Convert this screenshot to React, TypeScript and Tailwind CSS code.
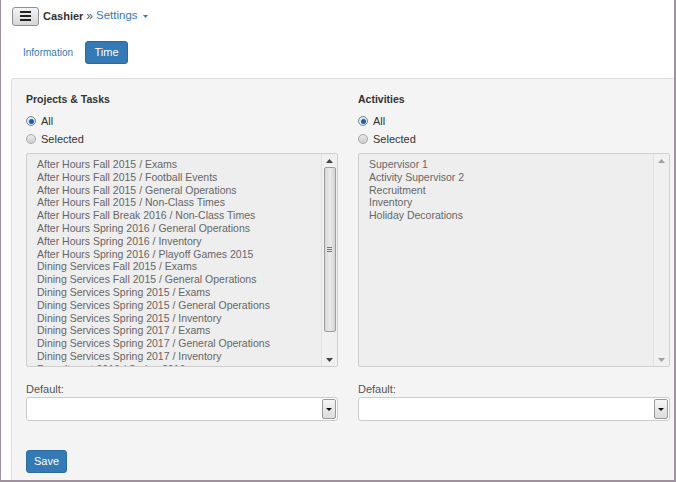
import React from 'react';

const projects = [
  'After Hours Fall 2015 / Exams',
  'After Hours Fall 2015 / Football Events',
  'After Hours Fall 2015 / General Operations',
  'After Hours Fall 2015 / Non-Class Times',
  'After Hours Fall Break 2016 / Non-Class Times',
  'After Hours Spring 2016 / General Operations',
  'After Hours Spring 2016 / Inventory',
  'After Hours Spring 2016 / Playoff Games 2015',
  'Dining Services Fall 2015 / Exams',
  'Dining Services Fall 2015 / General Operations',
  'Dining Services Spring 2015 / Exams',
  'Dining Services Spring 2015 / General Operations',
  'Dining Services Spring 2015 / Inventory',
  'Dining Services Spring 2017 / Exams',
  'Dining Services Spring 2017 / General Operations',
  'Dining Services Spring 2017 / Inventory',
  'Recruitment 2016 / Spring 2016',
];

const activities = ['Supervisor 1', 'Activity Supervisor 2', 'Recruitment', 'Inventory', 'Holiday Decorations'];

function Radio({ checked, label }: { checked?: boolean; label: string }) {
  return (
    <label className="flex items-center h-[18px] gap-[5px] text-[11px] text-[#333]">
      <span
        className={`w-[10px] h-[10px] rounded-full border flex items-center justify-center ${
          checked ? 'border-[#7a8a99] bg-[#dfe7ef]' : 'border-[#a8a8a8] bg-gradient-to-b from-[#e8e8e8] to-[#d0d0d0]'
        }`}
      >
        {checked && <span className="w-[5px] h-[5px] rounded-full bg-[#1b5fa8]" />}
      </span>
      {label}
    </label>
  );
}

function Arrow({ up, dim }: { up?: boolean; dim?: boolean }) {
  return (
    <svg width="7" height="4" viewBox="0 0 7 4">
      <path d={up ? 'M0 4 L3.5 0 L7 4 Z' : 'M0 0 L7 0 L3.5 4 Z'} fill={dim ? '#a0a0a0' : '#444'} />
    </svg>
  );
}

function ListBox({ items, scroll }: { items: string[]; scroll?: boolean }) {
  return (
    <div className="relative h-[214px] border border-[#cfcfcf] bg-[#eeeeee] rounded-[2px] overflow-hidden">
      <div className="pl-[10px] pt-[4px] text-[10.5px] leading-[12.8px] text-[#666]">
        {items.map((t, i) => (
          <div key={i} className="whitespace-nowrap">{t}</div>
        ))}
      </div>
      <div className="absolute top-0 right-0 bottom-0 w-[16px] bg-[#f0f0f0] border-l border-[#e2e2e2] flex flex-col items-center">
        <div className="h-[13px] flex items-center"><Arrow up dim={!scroll} /></div>
        {scroll ? (
          <div className="w-[12px] h-[165px] rounded-[2px] border border-[#9d9d9d] bg-gradient-to-r from-[#d8d8d8] via-[#eaeaea] to-[#d3d3d3] flex flex-col items-center justify-center gap-[1px]">
            <span className="w-[5px] h-px bg-[#777]" />
            <span className="w-[5px] h-px bg-[#777]" />
            <span className="w-[5px] h-px bg-[#777]" />
          </div>
        ) : (
          <div className="h-[165px]" />
        )}
        <div className="flex-1" />
        <div className="h-[13px] flex items-center"><Arrow dim={!scroll} /></div>
      </div>
    </div>
  );
}

function Select() {
  return (
    <div className="h-[24px] border border-[#cccccc] rounded-[3px] bg-white flex justify-end items-stretch p-[1px]">
      <div className="w-[14px] border border-[#9a9a9a] rounded-[2px] bg-gradient-to-b from-[#f6f6f6] to-[#dcdcdc] flex items-center justify-center">
        <svg width="6" height="3" viewBox="0 0 6 3"><path d="M0 0 L6 0 L3 3 Z" fill="#111" /></svg>
      </div>
    </div>
  );
}

function Column({ title, items, scroll }: { title: string; items: string[]; scroll?: boolean }) {
  return (
    <div className="flex flex-col">
      <div className="h-[14px] leading-[14px] text-[10.5px] font-bold text-[#333]">{title}</div>
      <div className="mt-[6px]">
        <Radio checked label="All" />
        <Radio label="Selected" />
      </div>
      <div className="mt-[5px]">
        <ListBox items={items} scroll={scroll} />
      </div>
      <div className="mt-[15px] h-[14px] leading-[14px] text-[11px] text-[#555]">Default:</div>
      <div className="mt-[1px]">
        <Select />
      </div>
    </div>
  );
}

export default function App() {
  return (
    <div
      className="w-[676px] h-[482px] bg-white border-l border-r-2 border-b-2 border-[#9f929f] overflow-hidden flex flex-col"
      style={{ fontFamily: '"Liberation Sans", Arial, sans-serif' }}
    >
      <div className="flex items-center pl-[11px] pt-[7px] h-[25px]">
        <button className="w-[27px] h-[19px] rounded-[3px] border border-[#8f8f8f] bg-gradient-to-b from-[#f4f4f4] to-[#d6d6d6] flex flex-col items-center justify-center gap-[2px]">
          <span className="w-[11px] h-[2px] bg-[#222]" />
          <span className="w-[11px] h-[2px] bg-[#222]" />
          <span className="w-[11px] h-[2px] bg-[#222]" />
        </button>
        <span className="ml-[4px] text-[11px] font-bold text-[#333]">Cashier</span>
        <span className="ml-[3px] text-[12px] text-[#555]">»</span>
        <span className="ml-[3px] text-[11.5px] text-[#337ab7]">Settings</span>
        <svg className="ml-[5px]" width="5" height="3" viewBox="0 0 5 3"><path d="M0 0 L5 0 L2.5 3 Z" fill="#337ab7" /></svg>
      </div>

      <div className="flex items-center mt-[15px] h-[24px] pl-[11px]">
        <a className="px-[11px] text-[10px] text-[#337ab7]">Information</a>
        <a className="ml-[1px] h-[23px] w-[43px] rounded-[3px] bg-[#337ab7] border border-[#2a6aa3] text-white text-[11px] flex items-center justify-center">
          Time
        </a>
      </div>

      <div className="mt-[14px] ml-[10px] flex-1 bg-[#f4f4f4] border-l border-t border-[#dedede] rounded-tl-[4px] pt-[13px] pl-[14px] pr-[4px]">
        <div className="grid grid-cols-[312px_312px] gap-x-[20px]">
          <Column title="Projects & Tasks" items={projects} scroll />
          <Column title="Activities" items={activities} />
        </div>
        <button className="mt-[29px] h-[23px] w-[41px] rounded-[3px] bg-[#337ab7] border border-[#2e6da4] text-white text-[11px]">
          Save
        </button>
      </div>
    </div>
  );
}
